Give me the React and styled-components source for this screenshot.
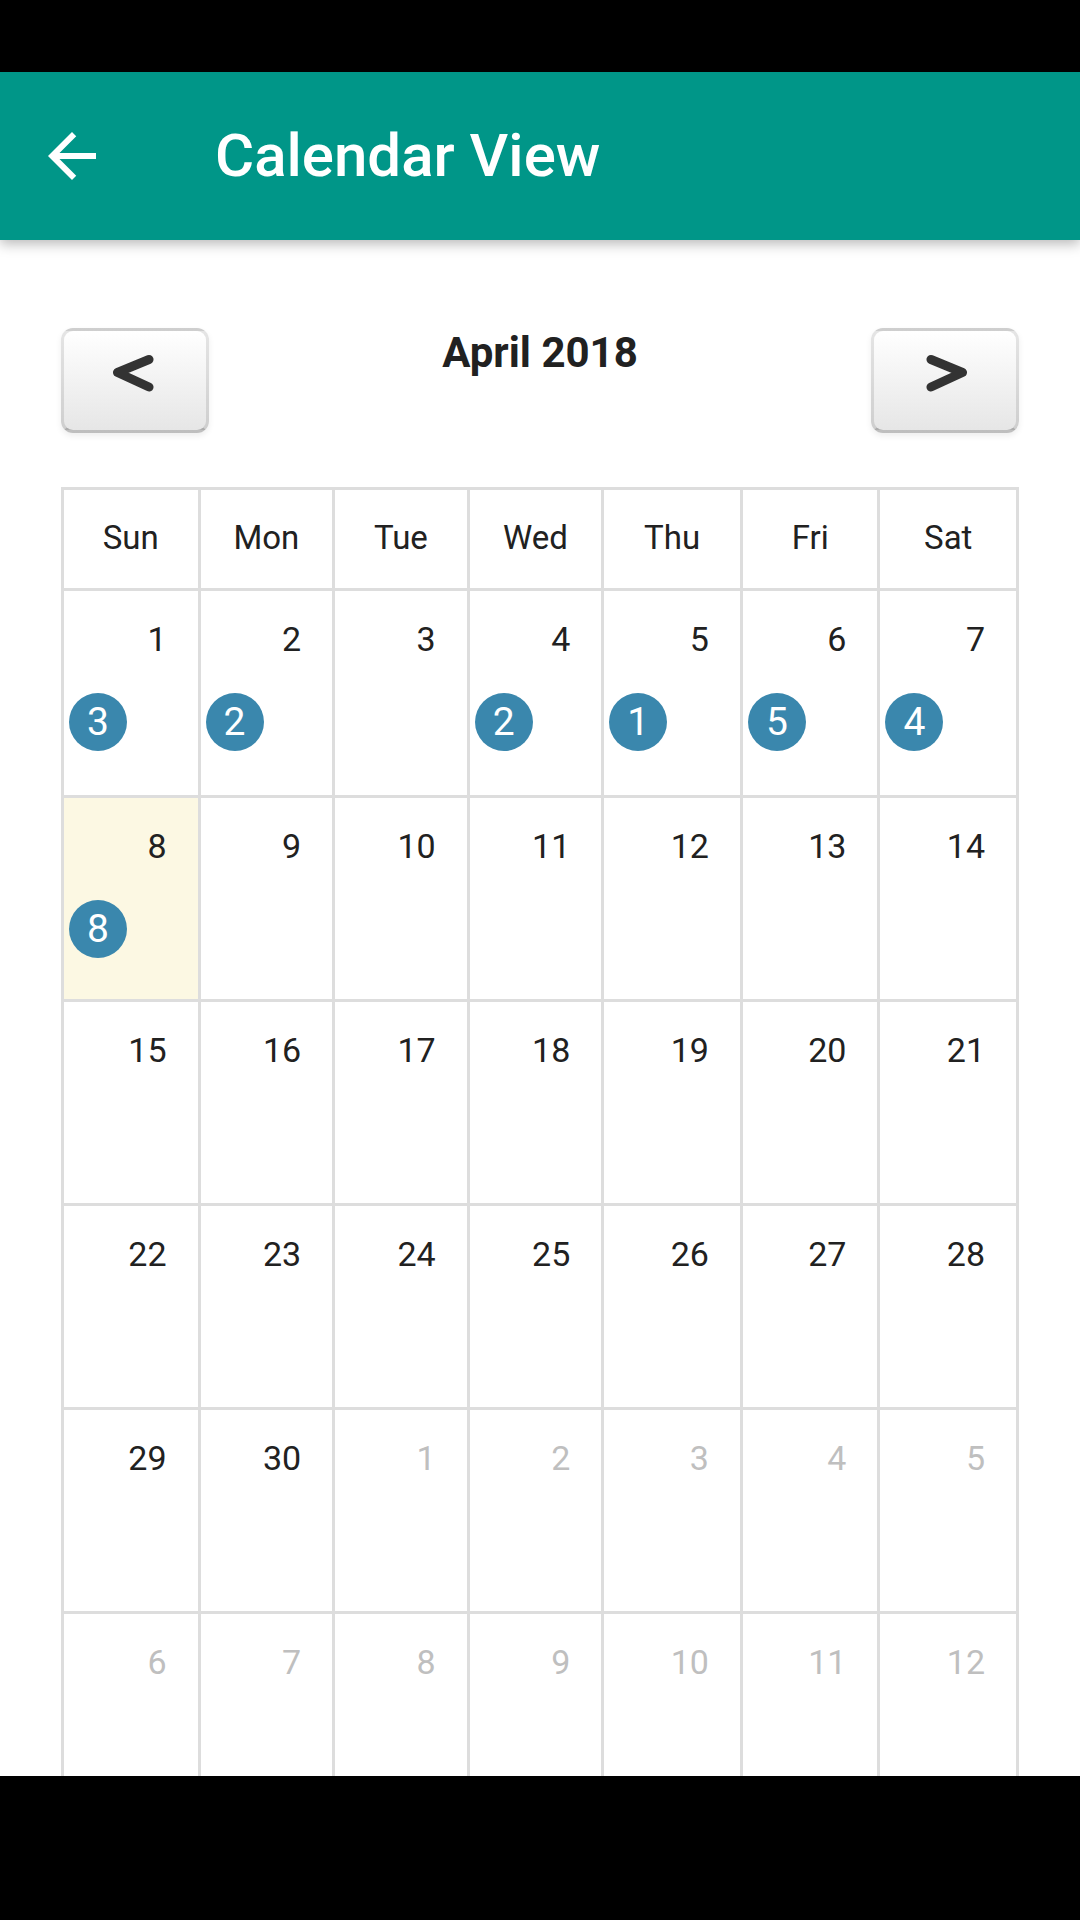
import React from 'react';
import styled, { createGlobalStyle } from 'styled-components';

const GlobalStyle = createGlobalStyle`
  html, body {
    margin: 0;
    padding: 0;
    background: #fff;
  }
  body {
    font-family: Roboto, 'Noto Sans', 'Liberation Sans', sans-serif;
    color: #212121;
  }
  * {
    box-sizing: border-box;
  }
`;

const Screen = styled.div`
  width: 1080px;
  height: 1920px;
  display: flex;
  flex-direction: column;
  overflow: hidden;
  background: #fff;
`;

const StatusBar = styled.div`
  height: 72px;
  background: #000;
  flex: none;
`;

const AppBar = styled.header`
  height: 168px;
  flex: none;
  display: flex;
  align-items: center;
  background: #009688;
  color: #fff;
  position: relative;
  z-index: 1;
  box-shadow: 0 4px 12px rgba(0, 0, 0, 0.28);
`;

const BackButton = styled.button`
  width: 72px;
  height: 72px;
  margin-left: 36px;
  padding: 0;
  border: 0;
  background: none;
  display: flex;
  align-items: center;
  justify-content: center;
`;

const Title = styled.h1`
  margin: 0 0 0 107px;
  font-size: 60px;
  font-weight: 500;
  line-height: 1;
`;

const Content = styled.main`
  flex: 1;
  overflow: hidden;
  padding: 88px 61px 0;
`;

const Toolbar = styled.div`
  display: flex;
  justify-content: space-between;
  align-items: flex-start;
  height: 105px;
`;

const NavButton = styled.button`
  width: 148px;
  height: 105px;
  padding: 0 0 16px;
  border: 3px solid;
  border-color: rgba(0, 0, 0, 0.1) rgba(0, 0, 0, 0.1) rgba(0, 0, 0, 0.25);
  border-radius: 12px;
  background: linear-gradient(to bottom, #fff, #e6e6e6);
  box-shadow: inset 0 3px 0 rgba(255, 255, 255, 0.2), 0 3px 6px rgba(0, 0, 0, 0.07);
  display: flex;
  align-items: center;
  justify-content: center;
`;

const MonthTitle = styled.h2`
  margin: 0;
  font-size: 42px;
  font-weight: 700;
  line-height: 49px;
  color: #212121;
`;

const Month = styled.div`
  margin-top: 54px;
  display: grid;
  grid-template-columns: 137fr 135fr 135fr 135fr 139fr 138fr 139fr;
  border-top: 3px solid #ddd;
  border-left: 3px solid #ddd;
`;

const HeadCell = styled.div`
  height: 101px;
  padding-bottom: 4px;
  border-right: 3px solid #ddd;
  border-bottom: 3px solid #ddd;
  display: flex;
  align-items: center;
  justify-content: center;
  font-size: 33px;
  color: #212121;
`;

const DayCell = styled.div`
  height: ${(p) => (p.$first ? 207 : 204)}px;
  border-right: 3px solid #ddd;
  border-bottom: 3px solid #ddd;
  background: ${(p) => (p.$today ? '#fcf8e3' : '#fff')};
  padding: 28px 0 0 5px;
  display: flex;
  flex-direction: column;
`;

const DayNumber = styled.div`
  text-align: right;
  padding-right: 31px;
  font-size: 34px;
  line-height: 40px;
  color: ${(p) => (p.$other ? '#bfbfbf' : '#212121')};
`;

const Badge = styled.div`
  margin-top: 34px;
  width: 58px;
  height: 58px;
  border-radius: 50%;
  background: #3a87ad;
  color: #fff;
  font-size: 39px;
  line-height: 58px;
  text-align: center;
`;

const NavBar = styled.div`
  height: 144px;
  flex: none;
  background: #000;
`;

const DAY_NAMES = ['Sun', 'Mon', 'Tue', 'Wed', 'Thu', 'Fri', 'Sat'];
const EVENTS = { 1: 3, 2: 2, 4: 2, 5: 1, 6: 5, 7: 4, 8: 8 };
const TODAY = 8;

function buildWeeks() {
  const days = [];
  for (let d = 1; d <= 30; d++) days.push({ day: d, other: false });
  for (let d = 1; days.length < 42; d++) days.push({ day: d, other: true });
  const weeks = [];
  for (let i = 0; i < 42; i += 7) weeks.push(days.slice(i, i + 7));
  return weeks;
}

function ArrowBack() {
  return (
    <svg width="72" height="72" viewBox="0 0 24 24" fill="#fff">
      <path d="M20 11H7.83l5.59-5.59L12 4l-8 8 8 8 1.41-1.41L7.83 13H20v-2z" />
    </svg>
  );
}

function Chevron({ dir }) {
  const points = dir === 'left' ? '37,8.5 5.5,21.5 37,36' : '9,8.5 40.5,21.5 9,36';
  return (
    <svg width="46" height="44" viewBox="0 0 46 44">
      <polyline
        points={points}
        fill="none"
        stroke="#333"
        strokeWidth="9"
        strokeLinecap="round"
        strokeLinejoin="round"
      />
    </svg>
  );
}

export default function App() {
  const weeks = buildWeeks();
  return (
    <>
      <GlobalStyle />
      <Screen>
        <StatusBar />
        <AppBar>
          <BackButton aria-label="Back">
            <ArrowBack />
          </BackButton>
          <Title>Calendar View</Title>
        </AppBar>
        <Content>
          <Toolbar>
            <NavButton aria-label="Previous month">
              <Chevron dir="left" />
            </NavButton>
            <MonthTitle>April 2018</MonthTitle>
            <NavButton aria-label="Next month">
              <Chevron dir="right" />
            </NavButton>
          </Toolbar>
          <Month>
            {DAY_NAMES.map((name) => (
              <HeadCell key={name}>{name}</HeadCell>
            ))}
            {weeks.map((week, w) =>
              week.map(({ day, other }) => {
                const count = !other ? EVENTS[day] : undefined;
                return (
                  <DayCell
                    key={`${w}-${day}`}
                    $first={w === 0}
                    $today={!other && day === TODAY}
                  >
                    <DayNumber $other={other}>{day}</DayNumber>
                    {count && <Badge>{count}</Badge>}
                  </DayCell>
                );
              })
            )}
          </Month>
        </Content>
        <NavBar />
      </Screen>
    </>
  );
}
